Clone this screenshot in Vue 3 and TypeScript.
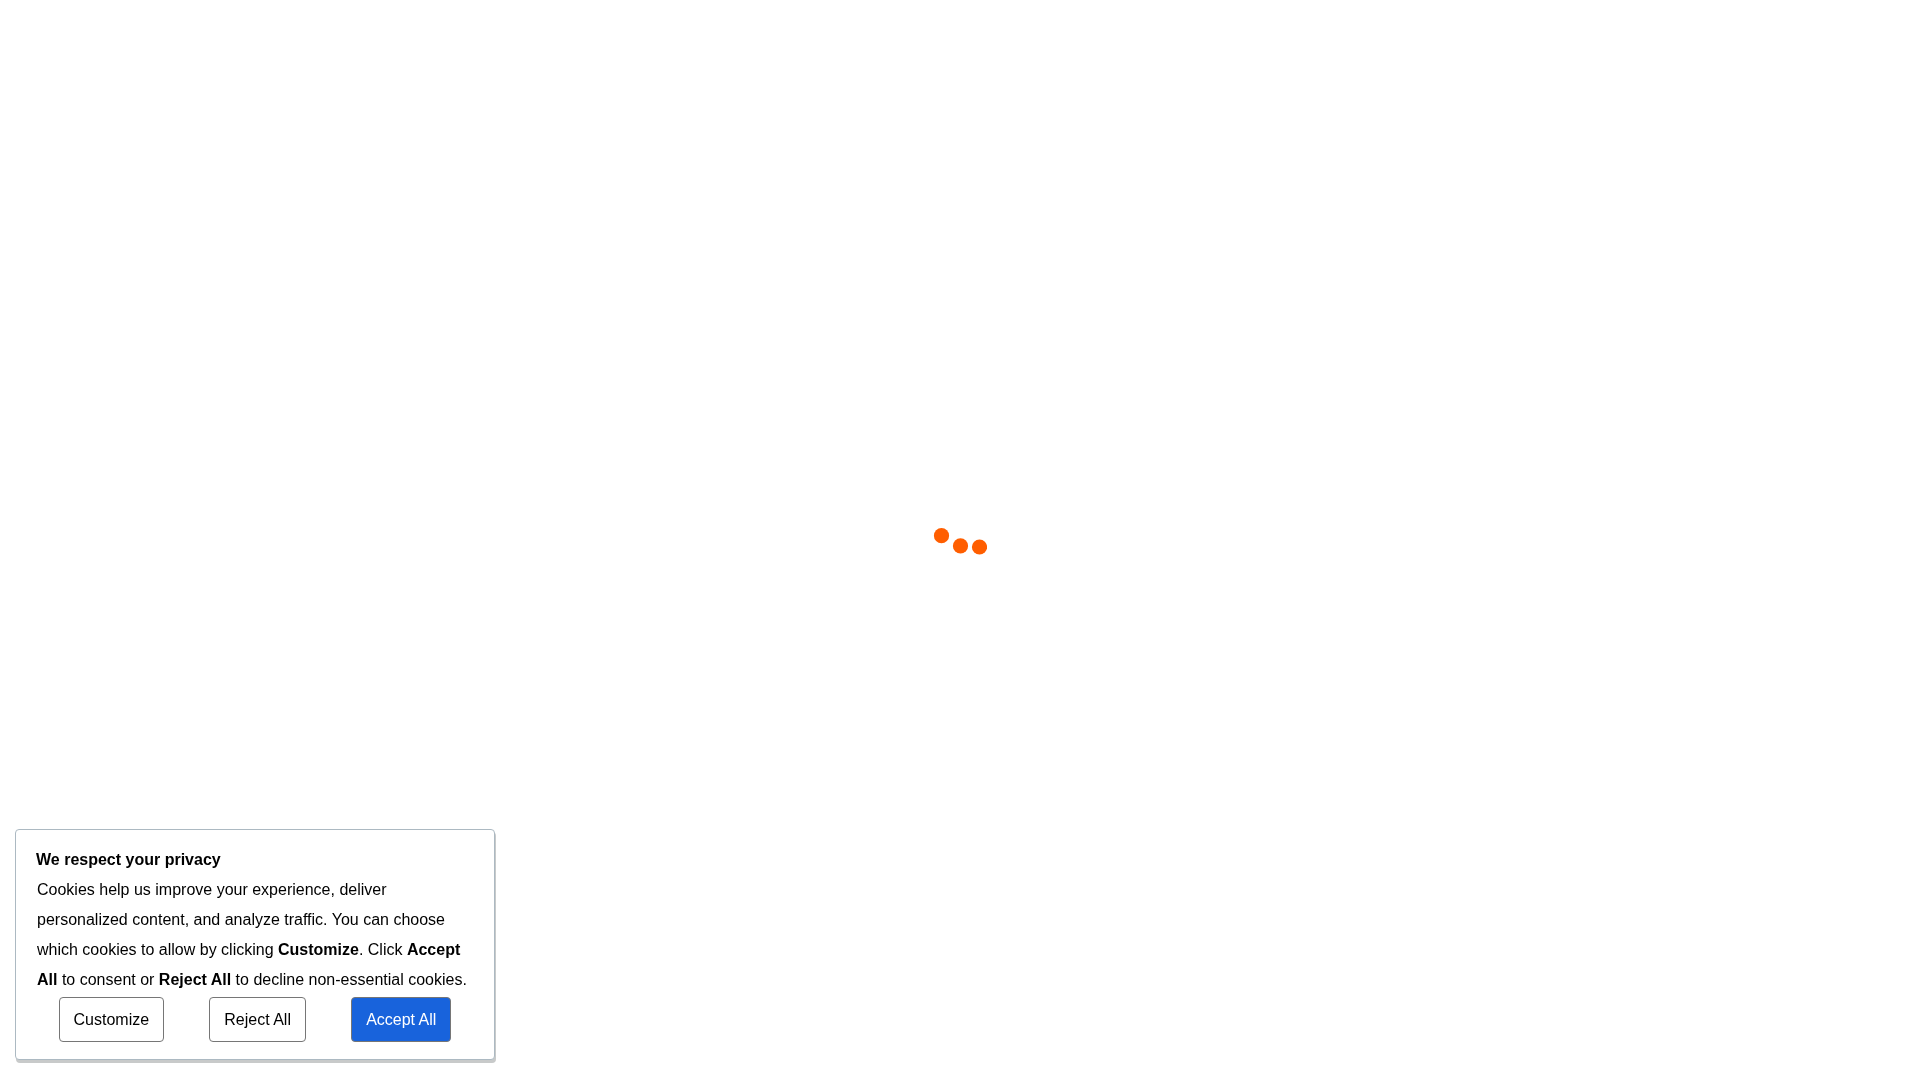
<script setup lang="ts">
import { ref } from 'vue'

const open = ref(true)
const close = () => { open.value = false }
</script>

<template>
  <main class="page">
    <svg class="loader" viewBox="0 0 54 30" role="img" aria-label="Loading">
      <circle cx="8.5" cy="10.7" r="7.6" />
      <circle cx="27.5" cy="20.9" r="7.6" />
      <circle cx="46.5" cy="22" r="7.6" />
    </svg>
    <section v-if="open" class="consent" aria-labelledby="consent-title">
      <h2 id="consent-title">We respect your privacy</h2>
      <p>
        Cookies help us improve your experience, deliver personalized content, and analyze traffic.
        You can choose which cookies to allow by clicking <strong>Customize</strong>. Click
        <strong>Accept All</strong> to consent or <strong>Reject All</strong> to decline
        non-essential cookies.
      </p>
      <div class="actions">
        <button type="button">Customize</button>
        <button type="button" @click="close">Reject All</button>
        <button type="button" class="primary" @click="close">Accept All</button>
      </div>
    </section>
  </main>
</template>

<style scoped>
.page {
  display: flex;
  align-items: center;
  justify-content: center;
  min-height: 100vh;
  background: #fff;
  color: #000;
  font: 16px/30px "Liberation Sans", Arial, sans-serif;
}
.loader {
  width: 54px;
  height: 30px;
  fill: #ff5e00;
}
.consent {
  position: fixed;
  left: 15px;
  bottom: 20px;
  box-sizing: border-box;
  width: 480px;
  max-width: calc(100vw - 30px);
  padding: 15px 20px 17px;
  background: #fff;
  border: 1px solid #acb9c2;
  border-radius: 4px;
  box-shadow: 1px 3px #c8caca;
}
h2 {
  margin: 0;
  font-size: 16px;
  line-height: 30px;
}
p {
  margin: 0 1px;
}
.actions {
  display: flex;
  justify-content: space-around;
  margin-top: 2px;
}
button {
  padding: 7px 14px 6px;
  border: 1px solid #767676;
  border-radius: 4px;
  background: #fff;
  color: #000;
  font: inherit;
  cursor: pointer;
}
.primary {
  background: #1863dc;
  color: #fff;
}
</style>
